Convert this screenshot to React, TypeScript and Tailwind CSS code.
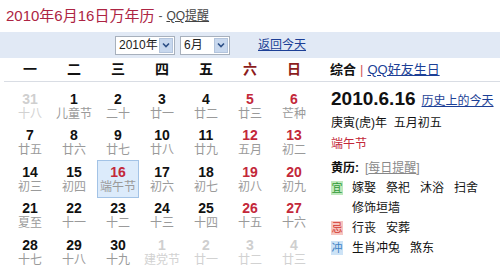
const weekdays = ["一", "二", "三", "四", "五", "六", "日"];

type Day = { d: number; l: string; out?: boolean; today?: boolean };

const weeks: Day[][] = [
  [
    { d: 31, l: "十八", out: true },
    { d: 1, l: "儿童节" },
    { d: 2, l: "二十" },
    { d: 3, l: "廿一" },
    { d: 4, l: "廿二" },
    { d: 5, l: "廿三" },
    { d: 6, l: "芒种" },
  ],
  [
    { d: 7, l: "廿五" },
    { d: 8, l: "廿六" },
    { d: 9, l: "廿七" },
    { d: 10, l: "廿八" },
    { d: 11, l: "廿九" },
    { d: 12, l: "五月" },
    { d: 13, l: "初二" },
  ],
  [
    { d: 14, l: "初三" },
    { d: 15, l: "初四" },
    { d: 16, l: "端午节", today: true },
    { d: 17, l: "初六" },
    { d: 18, l: "初七" },
    { d: 19, l: "初八" },
    { d: 20, l: "初九" },
  ],
  [
    { d: 21, l: "夏至" },
    { d: 22, l: "十一" },
    { d: 23, l: "十二" },
    { d: 24, l: "十三" },
    { d: 25, l: "十四" },
    { d: 26, l: "十五" },
    { d: 27, l: "十六" },
  ],
  [
    { d: 28, l: "十七" },
    { d: 29, l: "十八" },
    { d: 30, l: "十九" },
    { d: 1, l: "建党节", out: true },
    { d: 2, l: "廿一", out: true },
    { d: 3, l: "廿二", out: true },
    { d: 4, l: "廿三", out: true },
  ],
];

function Chevron() {
  return (
    <svg width="8" height="6" viewBox="0 0 8 6">
      <path d="M1 1.5 L4 4.5 L7 1.5" fill="none" stroke="#2d4f86" strokeWidth="1.6" />
    </svg>
  );
}

function Select({ value, width }: { value: string; width: string }) {
  return (
    <div className={`flex h-[19px] items-center justify-between border border-[#a7b0bc] bg-white pl-[3px] pr-px ${width}`}>
      <span className="text-[12px] leading-none text-[#222]">{value}</span>
      <span className="flex h-[15px] w-[14px] items-center justify-center border border-[#b3c4dc] bg-[#c8d8ee]">
        <Chevron />
      </span>
    </div>
  );
}

function Cell({ day, col }: { day: Day; col: number }) {
  const weekend = col >= 5;
  const numColor = day.out
    ? "text-[#cfcfcf]"
    : day.today || weekend
      ? "text-[#c3283a]"
      : "text-[#111]";
  const lunarColor = day.out ? "text-[#d2d2d2]" : "text-[#9a9a9a]";
  return (
    <div className="flex h-[36.5px] w-[44px] items-center justify-center">
      <div
        className={`flex h-[38px] w-[42px] flex-col items-center justify-center ${
          day.today ? "border border-[#a3c3e6] bg-[#dcebfb]" : ""
        }`}
      >
        <span className={`text-[14px] font-bold leading-[16px] ${numColor}`}>{day.d}</span>
        <span className={`text-[12px] leading-[15px] ${lunarColor}`}>{day.l}</span>
      </div>
    </div>
  );
}

function Tag({ label, tone }: { label: string; tone: string }) {
  return (
    <span className={`flex h-[14px] w-[12px] shrink-0 items-center justify-center text-[11px] leading-none ${tone}`}>
      {label}
    </span>
  );
}

export default function App() {
  return (
    <div className="h-[273px] w-[500px] overflow-hidden bg-white [font-family:'Liberation_Sans','Noto_Sans_CJK_SC',sans-serif]">
      {/* title */}
      <div className="flex h-[32px] items-center gap-[4px] pl-[6px]">
        <span className="text-[15px] text-[#ad2443]">2010年6月16日万年历</span>
        <span className="text-[12px] text-[#555]">-</span>
        <a href="#" className="text-[12px] text-[#444] underline">QQ提醒</a>
      </div>

      {/* selects bar */}
      <div className="flex h-[26px] items-center bg-[#e1e9f5] pl-[115px]">
        <Select value="2010年" width="w-[60px]" />
        <div className="ml-[5px]">
          <Select value="6月" width="w-[50px]" />
        </div>
        <a href="#" className="ml-[28px] text-[12px] text-[#1c3f96] underline">返回今天</a>
      </div>

      {/* header row */}
      <div className="ml-[4px] flex h-[24px] items-center border-b border-[#d9dde4]">
        <div className="flex w-[316px] pl-[4px]">
          {weekdays.map((w, i) => (
            <div
              key={w}
              className={`w-[44px] text-center text-[14px] font-bold ${i >= 5 ? "text-[#8c1c1c]" : "text-[#111]"}`}
            >
              {w}
            </div>
          ))}
        </div>
        <div className="flex items-center gap-[4px] pl-[10px] text-[13px]">
          <span className="font-bold text-[#111]">综合</span>
          <span className="text-[#d25a5a]">|</span>
          <a href="#" className="text-[#1c3f96] underline">QQ好友生日</a>
        </div>
      </div>

      {/* body */}
      <div className="flex pt-[6px]">
        <div className="w-[320px] pl-[8px]">
          {weeks.map((wk, r) => (
            <div key={r} className="flex">
              {wk.map((day, c) => (
                <Cell key={c} day={day} col={c} />
              ))}
            </div>
          ))}
        </div>

        <div className="flex-1 pl-[11px] text-[12px] text-[#111]">
          <div className="flex h-[22px] items-center gap-[6px]">
            <span className="text-[19px] font-bold">2010.6.16</span>
            <a href="#" className="pt-[3px] text-[12px] text-[#1c3f96] underline">历史上的今天</a>
          </div>
          <div className="mt-[4px] leading-[18px] whitespace-pre">庚寅(虎)年  五月初五</div>
          <div className="mt-[3px] leading-[18px] text-[#c3283a]">端午节</div>
          <div className="mt-[6px] flex leading-[18px]">
            <span className="font-bold">黄历:</span>
            <span className="ml-[6px] text-[#888]">
              [<a href="#" className="text-[#888] underline">每日提醒</a>]
            </span>
          </div>
          <div className="mt-[1px] flex items-start gap-[9px]">
            <div className="mt-[3px]">
              <Tag label="宜" tone="bg-[#bfe8bd] text-[#2f9a38]" />
            </div>
            <div className="flex w-[140px] flex-wrap gap-x-[10px] leading-[20px]">
              <span>嫁娶</span>
              <span>祭祀</span>
              <span>沐浴</span>
              <span>扫舍</span>
              <span>修饰垣墙</span>
            </div>
          </div>
          <div className="flex items-center gap-[9px] leading-[20px]">
            <Tag label="忌" tone="bg-[#f6c5c0] text-[#d2372f]" />
            <div className="flex gap-x-[10px]">
              <span>行丧</span>
              <span>安葬</span>
            </div>
          </div>
          <div className="flex items-center gap-[9px] leading-[20px]">
            <Tag label="冲" tone="bg-[#cde3f6] text-[#3d82c4]" />
            <div className="flex gap-x-[10px]">
              <span>生肖冲兔</span>
              <span>煞东</span>
            </div>
          </div>
        </div>
      </div>
    </div>
  );
}
